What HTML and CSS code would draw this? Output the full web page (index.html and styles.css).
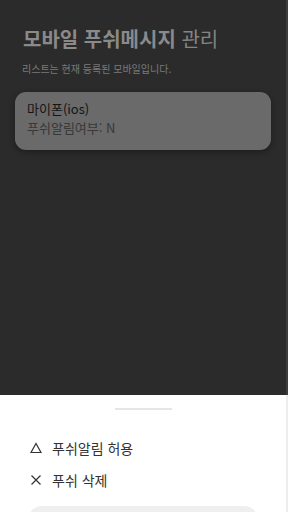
FILE: index.html
```html
<!DOCTYPE html>
<html lang="ko">

<head>
    <meta charset="UTF-8">
    <meta name="viewport" content="width=device-width, initial-scale=1.0">
    <title>모바일 푸쉬메시지 관리</title>
    <link rel="stylesheet" href="styles.css">
</head>

<body>
    <div class="screen">
        <div class="page">
            <h1 class="title"><strong>모바일 푸쉬메시지</strong> 관리</h1>
            <p class="desc">리스트는 현재 등록된 모바일입니다.</p>
            <div class="device-card">
                <div class="device-name">마이폰(ios)</div>
                <div class="device-push">푸쉬알림여부: N</div>
            </div>
        </div>
        <div class="sheet">
            <div class="handle"></div>
            <ul class="menu">
                <li class="menu-item">
                    <svg class="icon" viewBox="0 0 12 12" width="12" height="12">
                        <path d="M6 1.5 L11 10.5 L1 10.5 Z" fill="none" stroke="#333" stroke-width="1.2" stroke-linejoin="miter" />
                    </svg>
                    <span>푸쉬알림 허용</span>
                </li>
                <li class="menu-item">
                    <svg class="icon" viewBox="0 0 12 12" width="12" height="12">
                        <path d="M1.5 1.5 L10.5 10.5 M10.5 1.5 L1.5 10.5" fill="none" stroke="#333" stroke-width="1.2" />
                    </svg>
                    <span>푸쉬 삭제</span>
                </li>
            </ul>
            <div class="cancel-btn"></div>
        </div>
    </div>
    <div class="scrollbar"></div>
</body>

</html>
```

FILE: styles.css
```css
/* Base */

body {
    margin: 0;
    display: flex;
    width: 288px;
    height: 512px;
    overflow: hidden;
    font-family: "Noto Sans CJK KR", "Noto Sans", sans-serif;
    background: #ffffff;
}

.screen {
    flex: 1;
    display: flex;
    flex-direction: column;
    overflow: hidden;
}

.scrollbar {
    width: 2px;
    background: linear-gradient(#3c3c3c 0, #3c3c3c 395px, #ededed 395px);
}
/* Dimmed page */

.page {
    flex: none;
    height: 395px;
    box-sizing: border-box;
    padding: 25px 15px 0 15px;
    background: #2b2b2b;
}

.title {
    margin: 0 0 0 8px;
    font-size: 20px;
    font-weight: 400;
    line-height: 28px;
    color: #848484;
}

.title strong {
    font-weight: 700;
    color: #8a8a8a;
}

.desc {
    margin: 9px 0 0 7px;
    font-size: 10px;
    line-height: 14px;
    color: #7a7a7a;
}

.device-card {
    margin-top: 16px;
    height: 58px;
    box-sizing: border-box;
    padding: 7px 12px;
    border-radius: 11px;
    background: #6a6a6a;
    box-shadow: 0 2px 6px rgba(0, 0, 0, 0.35);
}

.device-name {
    font-size: 13px;
    line-height: 19px;
    color: #141414;
}

.device-push {
    font-size: 13px;
    line-height: 20px;
    color: #383838;
}
/* Bottom sheet */

.sheet {
    flex: 1;
    background: #ffffff;
    padding: 13px 0 0 0;
}

.handle {
    width: 57px;
    height: 2px;
    margin: 0 auto;
    background: #e6e6e6;
}

.menu {
    list-style: none;
    margin: 22px 0 0 0;
    padding: 0 0 0 30px;
}

.menu-item {
    display: flex;
    align-items: center;
    gap: 10px;
    height: 32px;
    font-size: 14px;
    color: #333333;
}

.icon {
    flex: none;
}

.cancel-btn {
    margin: 10px 28px 0 28px;
    height: 40px;
    border-radius: 14px;
    background: #efefef;
}
```
